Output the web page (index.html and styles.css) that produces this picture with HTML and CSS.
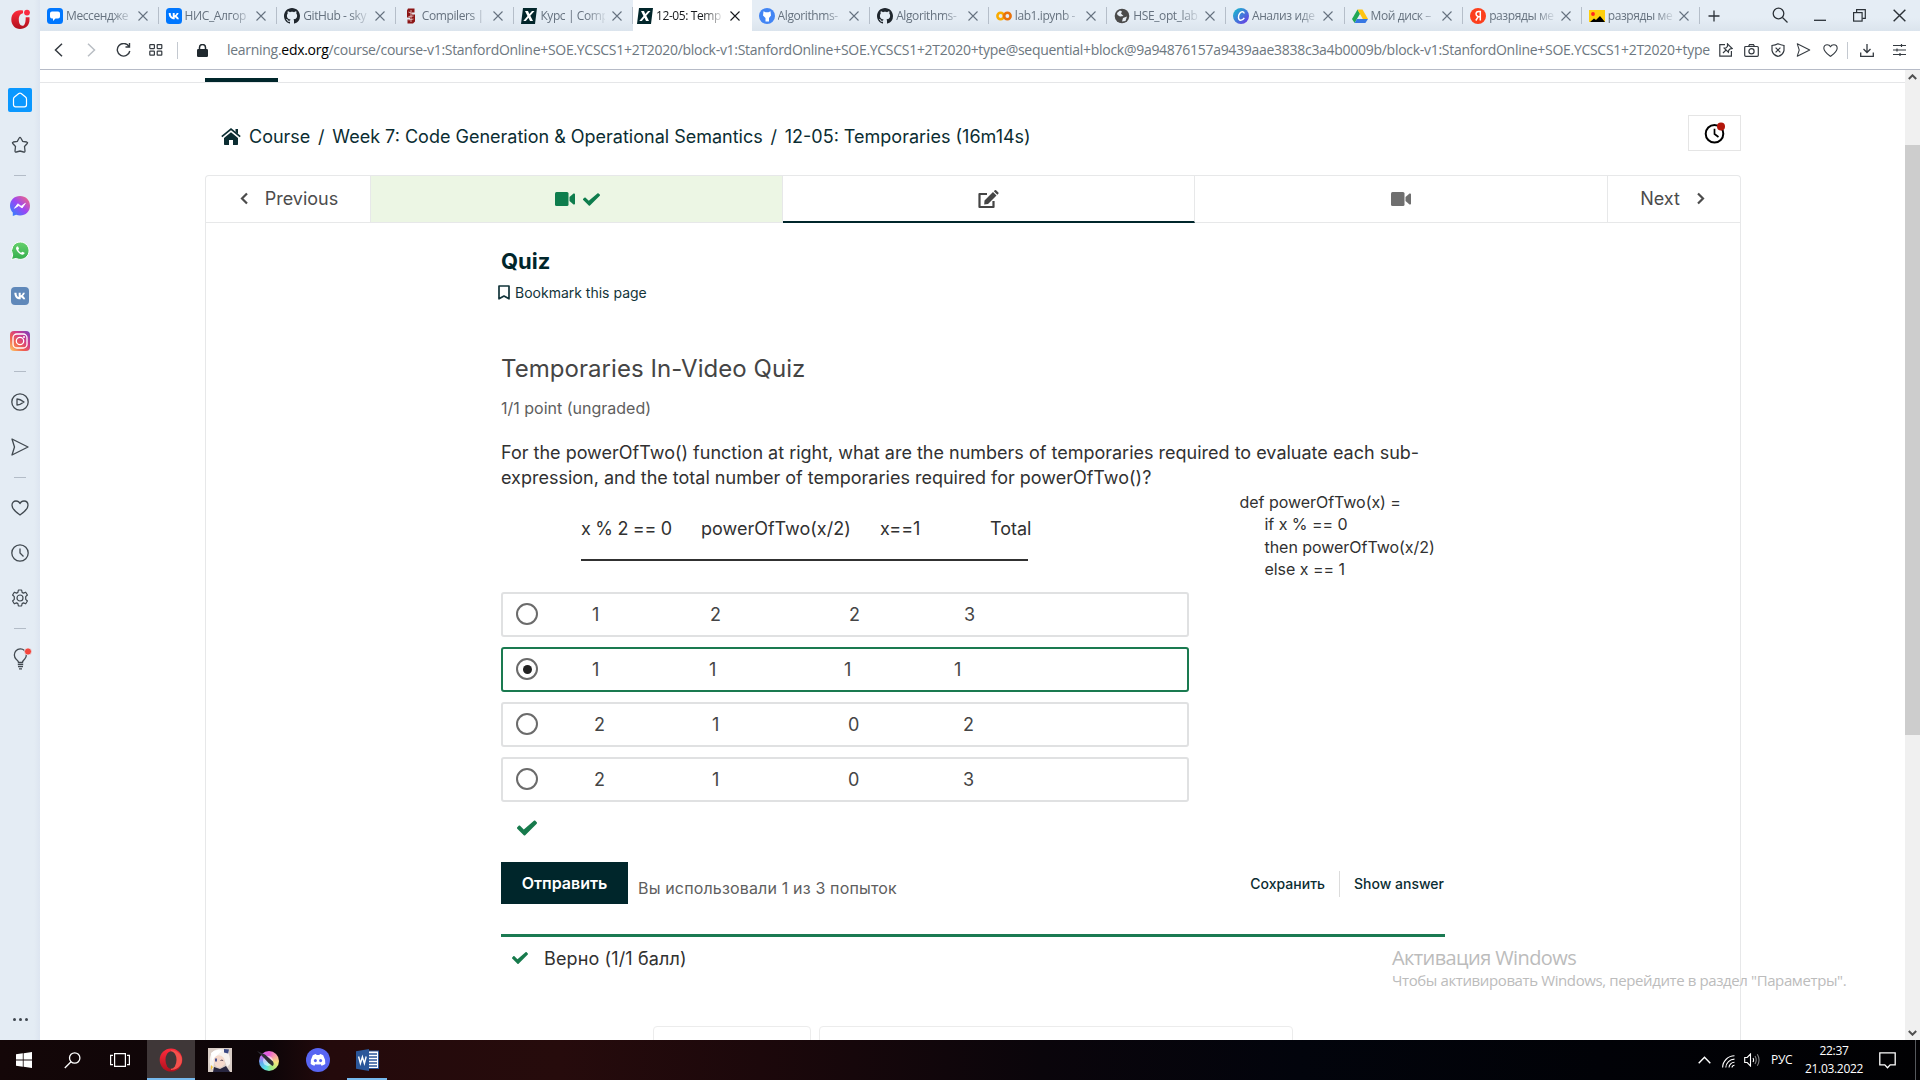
FILE: index.html
```html
<!DOCTYPE html>
<html lang="ru">
<head>
<meta charset="utf-8">
<title>12-05: Temporaries</title>
<link rel="stylesheet" href="styles.css">
</head>
<body>
<svg class="defs" width="0" height="0">
  <defs>
    <linearGradient id="gMess" x1="0" y1="1" x2="1" y2="0"><stop offset="0" stop-color="#1f8cff"/><stop offset=".5" stop-color="#9a46f5"/><stop offset="1" stop-color="#ff6b70"/></linearGradient>
    <linearGradient id="gInsta" x1="0" y1="1" x2="1" y2="0"><stop offset="0" stop-color="#ffd069"/><stop offset=".35" stop-color="#f0604f"/><stop offset=".65" stop-color="#cf3a8c"/><stop offset="1" stop-color="#7443c0"/></linearGradient>
    <linearGradient id="gWa" x1="0" y1="0" x2="0" y2="1"><stop offset="0" stop-color="#66d16d"/><stop offset="1" stop-color="#35ae4c"/></linearGradient>
    <linearGradient id="gCanva" x1="0" y1="0" x2="1" y2="1"><stop offset="0" stop-color="#10c3cc"/><stop offset="1" stop-color="#7230e6"/></linearGradient>
    <linearGradient id="gOpera" x1="0" y1="0" x2="0" y2="1"><stop offset="0" stop-color="#ff2b3c"/><stop offset="1" stop-color="#b0101d"/></linearGradient>
    <symbol id="close" viewBox="0 0 10 10"><path d="M.5.5l9 9M9.5.5l-9 9" fill="none" stroke="currentColor" stroke-width="1.1"/></symbol>
    <symbol id="vk" viewBox="0 0 24 24"><path d="M3.500 7h3.200c.1 4.400 1.900 6.100 3.300 6.500V7h3.100v3.700c1.500-.2 2.700-1.700 3.200-3.700h3c-.4 2.200-1.900 4-3.200 4.800 1.300.6 3 2.200 3.800 5.200h-3.300c-.6-1.800-1.800-3-3.500-3.200V17h-.6C7 17 3.700 13.300 3.500 7z" fill="#fff"/></symbol>
    <symbol id="github" viewBox="0 0 16 16"><path fill="currentColor" d="M8 0C3.580 0 0 3.580 0 8c0 3.540 2.290 6.530 5.470 7.590.4.070.55-.17.55-.38 0-.19-.01-.82-.01-1.490-2.010.37-2.530-.49-2.690-.94-.09-.23-.48-.94-.82-1.130-.28-.15-.68-.52-.01-.53.63-.01 1.080.58 1.230.82.72 1.210 1.870.87 2.330.66.070-.52.28-.87.51-1.070-1.780-.2-3.640-.89-3.640-3.950 0-.87.31-1.590.82-2.150-.08-.2-.36-1.020.08-2.120 0 0 .67-.21 2.200.82.64-.18 1.320-.27 2-.27s1.360.09 2 .27c1.530-1.040 2.200-.82 2.200-.82.44 1.100.16 1.920.08 2.120.51.56.82 1.270.82 2.150 0 3.070-1.870 3.750-3.650 3.950.29.25.54.73.54 1.480 0 1.070-.01 1.930-.01 2.200 0 .21.15.46.55.38A8.010 8.010 0 0 0 16 8c0-4.420-3.580-8-8-8z"/></symbol>
    <symbol id="heart" viewBox="0 0 18 18"><path d="M9 16C7 14.500 1 10.500 1 6.200 1 3.800 2.700 2 5 2c2 0 3.300 1 4 2.600C9.700 3 11 2 13 2c2.300 0 4 1.800 4 4.200C17 10.500 11 14.500 9 16z" fill="none" stroke="currentColor" stroke-width="1.300" stroke-linejoin="round"/></symbol>
    <symbol id="send" viewBox="0 0 18 18"><path d="M1 1l16 8L1 17l2.500-8z" fill="none" stroke="currentColor" stroke-width="1.300" stroke-linejoin="round"/></symbol>
    <symbol id="tick" viewBox="0 0 512 512"><path fill="currentColor" d="M174 440L7 273c-10-10-10-26 0-36l36-36c10-10 26-10 36 0l95 95L433 72c10-10 26-10 36 0l36 36c10 10 10 26 0 36L210 440c-10 10-26 10-36 0z"/></symbol>
    <symbol id="video" viewBox="0 0 20 14"><rect width="13.500" height="14" rx="1.500" fill="currentColor"/><path d="M14.500 5L18.500 1.600c.6-.4 1.500 0 1.500.7v9.400c0 .7-.9 1.100-1.500.7L14.500 9z" fill="currentColor"/></symbol>
  </defs>
</svg>

<div class="screen">
  <div class="browser">
    <aside class="rail">
      <div class="rail-logo"><svg width="21" height="21" viewBox="0 0 21 21"><path d="M10 1.200C5 1.200 1.300 5.200 1.300 10.500S5 20 10 20c5.500 0 9.500-3.500 9.500-9.500V8.200h-3.800c0 5.500-1 8.600-3.200 8.600-2.400 0-3.700-2.600-3.700-6.200 0-3.400 1.500-6 4.200-6.300V1.500C12.200 1.300 11 1.200 10 1.200z" fill="url(#gOpera)"/><circle cx="17" cy="3.600" r="2.900" fill="#fa2a41"/></svg></div>
      <div class="rail-item"><svg width="24" height="24" viewBox="0 0 24 24"><rect width="24" height="24" rx="2" fill="#0a98ff"/><path d="M10.800 5.500q1.200-.9 2.400 0l4.300 3.500q1 .8 1 2v5.800a2 2 0 0 1-2 2h-9a2 2 0 0 1-2-2V11q0-1.200 1-2z" fill="none" stroke="#fff" stroke-width="1.200" stroke-linejoin="round"/></svg></div>
      <div class="rail-item"><svg width="18" height="18" viewBox="0 0 18 18"><path d="M8.200 2q.8-1.300 1.600 0l1.900 3.300 4 .7q1.400.4.500 1.500l-2.700 3 .5 4.500q0 1.300-1.300 1L9 15l-3.700 1q-1.300.3-1.300-1l.5-4.500-2.700-3Q.9 6.400 2.300 6l4-.7z" fill="none" stroke="currentColor" stroke-width="1.300"/></svg></div>
      <div class="rail-dash"></div>
      <div class="rail-item"><svg width="20" height="20" viewBox="0 0 20 20"><path d="M10 0C4.300 0 0 4.200 0 9.700c0 3 1.200 5 2.800 6.800V20l3.300-1.200c1.200.5 2.500.7 3.900.7 5.700 0 10-4.200 10-9.800S15.700 0 10 0z" fill="url(#gMess)"/><path d="M4.500 12.300l3.300-4.500 3.300 2.500 4.300-3-3.300 4.700-3.300-2.500z" fill="#fff" stroke="#fff" stroke-width=".8"/></svg></div>
      <div class="rail-item"><svg width="20" height="20" viewBox="0 0 20 20"><path d="M10.500 1a8.700 8.700 0 1 1-4.200 16.400L1.500 18.500l1.200-4.600A8.700 8.700 0 0 1 10.500 1z" fill="url(#gWa)" stroke="#fff"/><path d="M7 5.500c-1.500 1-1.300 3 .7 5.200 2.200 2.500 4.700 3.500 6 2.600 1-.7 1-1.400.8-1.600l-2-1c-.7 0-.9 1.100-1.500 1-1-.3-2.500-1.800-2.700-2.700 0-.6.800-.8.700-1.400L8 5.500z" fill="#fff"/></svg></div>
      <div class="rail-item"><svg width="18" height="18" viewBox="0 0 18 18"><rect width="18" height="18" rx="4" fill="#5f88b9"/><use href="#vk" x="1" y="1" width="16" height="16"/></svg></div>
      <div class="rail-item"><svg width="20" height="20" viewBox="0 0 20 20"><rect width="20" height="20" rx="4" fill="url(#gInsta)"/><g fill="none" stroke="#fff" stroke-width="1.300"><rect x="3" y="3" width="14" height="14" rx="3.800"/><circle cx="10" cy="10" r="3.700"/></g><circle cx="14" cy="6" r="1" fill="#fff"/></svg></div>
      <div class="rail-dash"></div>
      <div class="rail-item shift"><svg width="18" height="18" viewBox="0 0 18 18" fill="none" stroke="currentColor" stroke-width="1.300" stroke-linejoin="round"><circle cx="9" cy="9" r="8.200"/><path d="M6 6v6q3 0 7-3-4-3-7-3z"/></svg></div>
      <div class="rail-item shift"><svg width="18" height="18"><use href="#send"/></svg></div>
      <div class="rail-dash"></div>
      <div class="rail-item shift"><svg width="18" height="18"><use href="#heart"/></svg></div>
      <div class="rail-item shift"><svg width="18" height="18" viewBox="0 0 18 18" fill="none" stroke="currentColor" stroke-width="1.300"><circle cx="9" cy="9" r="8.200"/><path d="M9 4.500V9l3.500 3.500"/></svg></div>
      <div class="rail-item shift"><svg width="18" height="18" viewBox="0 0 18 18" fill="none" stroke="currentColor" stroke-width="1.200" stroke-linejoin="round"><circle cx="9" cy="9" r="3"/><path d="M7.400 1h3.200l.5 2.400 1.300.7 2.300-.9 1.700 2.800-1.700 1.700v2.600l1.700 1.700-1.700 2.800-2.300-.9-1.300.7-.5 2.400H7.400l-.5-2.400-1.300-.7-2.300.9L1.600 12l1.700-1.700V7.700L1.600 6l1.700-2.800 2.300.9 1.300-.7z"/></svg></div>
      <div class="rail-dash"></div>
      <div class="rail-item"><svg width="24" height="24" viewBox="0 0 24 24"><path d="M10.500 15.500q0-1.300-2.300-3.300A6 6 0 1 1 16.700 12q-2.200 2-2.200 3.500z" fill="none" stroke="currentColor" stroke-width="1.300"/><path d="M9.800 17.500h5.400M10 19.700h5M11 21.800h3" stroke="currentColor" stroke-width="1.300"/><circle cx="20" cy="4.500" r="3.600" fill="#f4453c" stroke="#e4ecf4" stroke-width=".8"/></svg></div>
      <div class="rail-more"><i></i><i></i><i></i></div>
    </aside>

    <div class="window">
      <div class="tabbar">
        <div class="tab"><svg class="fav" viewBox="0 0 16 16"><rect width="16" height="16" rx="3.500" fill="#07f"/><path d="M5 3.500h6a2 2 0 0 1 2 2v3a2 2 0 0 1-2 2H8.500L6 13v-2.500H5a2 2 0 0 1-2-2v-3a2 2 0 0 1 2-2z" fill="#fff"/></svg><span class="tab-name">Мессендже</span><svg class="x"><use href="#close"/></svg></div>
        <div class="tab"><svg class="fav" viewBox="0 0 16 16"><rect width="16" height="16" rx="3.500" fill="#07f"/><use href="#vk" x=".5" y=".5" width="15" height="15"/></svg><span class="tab-name">НИС_Алгор</span><svg class="x"><use href="#close"/></svg></div>
        <div class="tab"><svg class="fav dark" viewBox="0 0 16 16"><use href="#github"/></svg><span class="tab-name">GitHub - sky</span><svg class="x"><use href="#close"/></svg></div>
        <div class="tab"><svg class="fav" viewBox="0 0 16 16"><path d="M5 .5h6.500v4H9v2h3v7L10 15.500H4.500v-4H7v-2H4v-7z" fill="#8c1515"/><path d="M8 2v12M5.500 4l5 2M5.500 8.500l5-.5M5.500 12l5-1" stroke="#e9cfd1" stroke-width=".8"/></svg><span class="tab-name">Compilers |</span><svg class="x"><use href="#close"/></svg></div>
        <div class="tab"><svg class="fav" viewBox="0 0 16 16"><path d="M2 0h14l-2 16H0z" fill="#02262b"/><path d="M4 3h3l1.300 3L11 3h2.500L9.300 7.800 12 13H9L7.500 9.800 4.800 13H2.300l4.200-5z" fill="#fff"/></svg><span class="tab-name">Курс | Comp</span><svg class="x"><use href="#close"/></svg></div>
        <div class="tab active"><svg class="fav" viewBox="0 0 16 16"><path d="M2 0h14l-2 16H0z" fill="#02262b"/><path d="M4 3h3l1.300 3L11 3h2.500L9.300 7.800 12 13H9L7.500 9.800 4.800 13H2.300l4.200-5z" fill="#fff"/></svg><span class="tab-name">12-05: Temp</span><svg class="x"><use href="#close"/></svg></div>
        <div class="tab"><svg class="fav" viewBox="0 0 16 16"><circle cx="8" cy="8" r="8" fill="#4285f4"/><path d="M4.500 3.200l2 1h3l2-1 .5 4.300-2 2.500v3.500H6.500V10L4 7.500z" fill="#fff"/></svg><span class="tab-name">Algorithms-</span><svg class="x"><use href="#close"/></svg></div>
        <div class="tab"><svg class="fav dark" viewBox="0 0 16 16"><use href="#github"/></svg><span class="tab-name">Algorithms-</span><svg class="x"><use href="#close"/></svg></div>
        <div class="tab"><svg class="fav" viewBox="0 0 16 16" fill="none" stroke-width="2.600"><circle cx="4.600" cy="8" r="3.200" stroke="#f9ab00"/><circle cx="11.400" cy="8" r="3.200" stroke="#e8710a"/></svg><span class="tab-name">lab1.ipynb -</span><svg class="x"><use href="#close"/></svg></div>
        <div class="tab"><svg class="fav" viewBox="0 0 16 16"><circle cx="8" cy="8" r="7.300" fill="#4b4b4b"/><path d="M3 5l3-2.500 2 1-1 2L9.500 8 6 8.500 3.500 7zM9 10l4-1.500L11.500 13 8 13.500z" fill="#e7eef5"/></svg><span class="tab-name">HSE_opt_lab</span><svg class="x"><use href="#close"/></svg></div>
        <div class="tab"><svg class="fav" viewBox="0 0 16 16"><circle cx="8" cy="8" r="8" fill="url(#gCanva)"/><path d="M11.200 5.500C11 3.500 8.500 3 6.800 5.200 4.800 7.800 5 12 7.500 12.200c1.500.1 2.800-.8 3.800-2.400" fill="none" stroke="#fff" stroke-width="1.400"/></svg><span class="tab-name">Анализ иде</span><svg class="x"><use href="#close"/></svg></div>
        <div class="tab"><svg class="fav" viewBox="0 0 16 16"><path d="M5.500 1.500L0 11l2.600 4L8 5.700z" fill="#20a756"/><path d="M5.500 1.500h5L16 11h-5.200z" fill="#ffc413"/><path d="M5 11h11l-2.600 4H2.600z" fill="#3777e3"/></svg><span class="tab-name">Мой диск –</span><svg class="x"><use href="#close"/></svg></div>
        <div class="tab"><svg class="fav" viewBox="0 0 16 16"><circle cx="8" cy="8" r="8" fill="#fc3f1d"/><path d="M10.300 12.500v-9H8.700C7 3.500 6 4.500 6 6.100c0 1.400.8 2 2.300 2.600h2M8.300 8.700l-2.500 3.800" fill="none" stroke="#fff" stroke-width="1.500"/></svg><span class="tab-name">разряды ме</span><svg class="x"><use href="#close"/></svg></div>
        <div class="tab"><svg class="fav" viewBox="0 0 16 16"><rect y="2" width="16" height="12" fill="#ffcf0d"/><circle cx="4" cy="6" r="1.900" fill="#f22"/><path d="M1 14l4-3.500 2 1.500 4-4 5 6z" fill="#000"/></svg><span class="tab-name">разряды ме</span><svg class="x"><use href="#close"/></svg></div>
        <div class="window-controls">
          <svg width="12" height="12" viewBox="0 0 12 12"><path d="M6 .5v11M.5 6h11" stroke="currentColor" stroke-width="1.300"/></svg>
          <svg width="16" height="16" viewBox="0 0 16 16" fill="none" stroke="currentColor" stroke-width="1.300"><circle cx="6.500" cy="6.500" r="5.300"/><path d="M10.500 10.500l5 5"/></svg>
          <svg width="12" height="12" viewBox="0 0 12 12"><path d="M0 11.300h12" stroke="currentColor" stroke-width="1.300"/></svg>
          <svg width="13" height="13" viewBox="0 0 13 13" fill="none" stroke="currentColor" stroke-width="1.200"><rect x=".6" y="3.600" width="8.500" height="8.500"/><path d="M3.600 3.500V.6h8.700v8.700h-3"/></svg>
          <svg width="13" height="13"><use href="#close"/></svg>
        </div>
      </div>

      <div class="toolbar">
        <div class="nav-icons">
          <svg width="9" height="14" viewBox="0 0 9 14"><path d="M8 .8L1.500 7 8 13.200" fill="none" stroke="currentColor" stroke-width="1.500"/></svg>
          <svg class="faint" width="9" height="14" viewBox="0 0 9 14"><path d="M1 .8L7.500 7 1 13.200" fill="none" stroke="currentColor" stroke-width="1.500"/></svg>
          <svg width="15" height="15" viewBox="0 0 15 15"><path d="M13 3.500A6.300 6.300 0 1 0 13.800 8M13.500 0v4H9.500" fill="none" stroke="currentColor" stroke-width="1.400"/></svg>
          <svg width="14" height="12" viewBox="0 0 14 12" fill="none" stroke="currentColor" stroke-width="1.200"><rect x=".8" y=".6" width="4.600" height="4" rx=".5"/><rect x="8.200" y=".6" width="4.600" height="4" rx=".5"/><rect x=".8" y="7.200" width="4.600" height="4" rx=".5"/><rect x="8.200" y="7.200" width="4.600" height="4" rx=".5"/></svg>
        </div>
        <div class="vline"></div>
        <svg class="lock" width="11" height="13" viewBox="0 0 11 13"><rect y="5" width="11" height="8" rx="1.200" fill="#20292f"/><path d="M2.500 5.500V3.500a3 3 0 0 1 6 0v2" fill="none" stroke="#20292f" stroke-width="1.500"/></svg>
        <div class="url">learning.<b>edx.org</b>/course/course-v1:StanfordOnline+SOE.YCSCS1+2T2020/block-v1:StanfordOnline+SOE.YCSCS1+2T2020+type@sequential+block@9a94876157a9439aae3838c3a4b0009b/block-v1:StanfordOnline+SOE.YCSCS1+2T2020+type</div>
        <div class="actions">
          <svg width="14" height="14" viewBox="0 0 14 14" fill="none" stroke="currentColor" stroke-width="1.200"><path d="M6 1.600H.8v11.600h11.600V8M4 10l3.200-3.200M8.500.8l4.700 4.700-2 .3-1.500 1.500-.3 2L5.200 5.200l2-.4 1.300-1.500z"/></svg>
          <svg width="15" height="13" viewBox="0 0 15 13" fill="none" stroke="currentColor" stroke-width="1.200"><rect x=".7" y="2.500" width="13.600" height="9.800" rx="1"/><path d="M4.500 2.500l1-1.800h4l1 1.800"/><circle cx="7.500" cy="7.200" r="2.600"/></svg>
          <svg width="14" height="14" viewBox="0 0 14 14" fill="none" stroke="currentColor" stroke-width="1.200"><path d="M1 2.500Q4.500 2 7 .7 9.500 2 13 2.500v5Q12 12 7 13.400 2 12 1 7.500zM4.600 4.600l4.800 4.800M9.400 4.600L4.600 9.400"/></svg>
          <svg width="15" height="14"><use href="#send"/></svg>
          <svg width="15" height="15"><use href="#heart"/></svg>
        </div>
        <div class="vline last"></div>
        <svg class="download" width="14" height="13" viewBox="0 0 14 13" fill="none" stroke="currentColor" stroke-width="1.300"><path d="M7 0v8.500M3.500 5L7 8.500 10.500 5M.7 8.500v3.800h12.600V8.500"/></svg>
        <svg class="sliders" width="13" height="12" viewBox="0 0 13 12" fill="none" stroke="currentColor" stroke-width="1.200"><path d="M0 1.500h13M0 6h13M0 10.500h13M8.500 0v3M4 4.500v3M7 9v3"/></svg>
      </div>

      <div class="viewport">
        <div class="page">
          <div class="course-tabs"><div class="course-tab-active"></div></div>
          <header class="crumb-row">
            <nav class="crumbs">
              <svg width="20" height="17" viewBox="0 0 20 17"><path d="M10 4.200l7 5.800v6.200a.7.700 0 0 1-.7.700H12v-5H8v5H3.700a.7.700 0 0 1-.7-.7V10z" fill="currentColor"/><path d="M.8 8.700L10 1.200l9.200 7.500" fill="none" stroke="currentColor" stroke-width="1.700"/><path d="M14.500 1H17v5l-2.500-2z" fill="currentColor"/></svg>
              <span class="c1">Course</span><span class="slash">/</span><span class="c2">Week 7: Code Generation &amp; Operational Semantics</span><span class="slash">/</span><span class="c3">12-05: Temporaries (16m14s)</span>
            </nav>
            <div class="notify"><svg width="22" height="22" viewBox="0 0 22 22"><circle cx="10.500" cy="11.700" r="8.800" fill="none" stroke="#000" stroke-width="2"/><path d="M10.500 6.700V12l4 3" fill="none" stroke="#000" stroke-width="1.700"/><circle cx="17" cy="4.500" r="4" fill="#b3160b"/></svg></div>
          </header>

          <div class="sequence">
            <div class="seq-nav">
              <div class="seq-prev"><svg width="8" height="13" viewBox="0 0 8 13"><path d="M7 1.500l-5 5 5 5" fill="none" stroke="currentColor" stroke-width="2.200"/></svg><span>Previous</span></div>
              <div class="seq-unit done"><svg width="20" height="14"><use href="#video"/></svg><svg width="17" height="17"><use href="#tick"/></svg></div>
              <div class="seq-unit current"><svg width="21" height="19" viewBox="0 0 21 19"><path d="M15.500 11v6H1.500V4H9" fill="none" stroke="currentColor" stroke-width="2.200" stroke-linejoin="round"/><path d="M6.500 10.500L15 2l3.500 3.500L10 14l-3.800.5zM15.800 1.200l1-1q.7-.4 1.300 0l2.300 2.300q.4.600 0 1.200l-1.100 1z" fill="currentColor"/></svg></div>
              <div class="seq-unit"><svg width="20" height="14"><use href="#video"/></svg></div>
              <div class="seq-next"><span>Next</span><svg width="8" height="13" viewBox="0 0 8 13"><path d="M1 1.500l5 5-5 5" fill="none" stroke="currentColor" stroke-width="2.200"/></svg></div>
            </div>

            <main class="unit">
              <h1>Quiz</h1>
              <div class="bookmark"><svg width="12" height="15" viewBox="0 0 12 15"><path d="M1 1h10v12.800L6 11l-5 2.800z" fill="none" stroke="currentColor" stroke-width="1.700" stroke-linejoin="round"/></svg><span>Bookmark this page</span></div>
              <h2>Temporaries In-Video Quiz</h2>
              <div class="points">1/1 point (ungraded)</div>
              <p class="question">For the powerOfTwo() function at right, what are the numbers of temporaries required to evaluate each sub-<br>expression, and the total number of temporaries required for powerOfTwo()?</p>

              <div class="columns">
                <div class="choices">
                  <div class="choice-head"><span>x % 2 == 0</span><span>powerOfTwo(x/2)</span><span>x==1</span><span>Total</span></div>
                  <div class="choice-rule"></div>
                  <div class="choice a"><i class="radio"></i><span>1</span><span>2</span><span>2</span><span>3</span></div>
                  <div class="choice b picked"><i class="radio"></i><span>1</span><span>1</span><span>1</span><span>1</span></div>
                  <div class="choice c"><i class="radio"></i><span>2</span><span>1</span><span>0</span><span>2</span></div>
                  <div class="choice c"><i class="radio"></i><span>2</span><span>1</span><span>0</span><span>3</span></div>
                  <div class="verdict"><svg width="20" height="20"><use href="#tick"/></svg></div>
                </div>
                <div class="code"><div>def powerOfTwo(x) =</div><div class="in">if x % == 0</div><div class="in">then powerOfTwo(x/2)</div><div class="in">else x == 1</div></div>
              </div>

              <div class="submit-row">
                <div class="submit">Отправить</div>
                <div class="attempts">Вы использовали 1 из 3 попыток</div>
                <div class="save">Сохранить</div>
                <div class="show">Show answer</div>
              </div>
              <div class="result"><svg width="16" height="16"><use href="#tick"/></svg><span>Верно (1/1 балл)</span></div>
              <div class="pager"><div class="pager-prev"></div><div class="pager-next"></div></div>
            </main>
          </div>
        </div>
        <div class="scrollbar">
          <svg width="9" height="6" viewBox="0 0 9 6"><path d="M.8 5L4.500 1.300 8.200 5" fill="none" stroke="#505050" stroke-width="2"/></svg>
          <div class="thumb"></div>
          <svg width="9" height="6" viewBox="0 0 9 6"><path d="M.8 1l3.700 3.700L8.200 1" fill="none" stroke="#505050" stroke-width="2"/></svg>
        </div>
      </div>
    </div>
  </div>

  <div class="taskbar">
    <div class="task"><svg width="16" height="16" viewBox="0 0 16 16" fill="#fff"><path d="M0 2.300l6.800-1v6.300H0zM7.600 1.200L16 0v7.600H7.600zM0 8.400h6.800v6.300l-6.800-1zM7.600 8.400H16V16l-8.400-1.200z"/></svg></div>
    <div class="task"><svg width="17" height="17" viewBox="0 0 17 17" fill="none" stroke="#fff" stroke-width="1.300"><circle cx="10.700" cy="6" r="5.200"/><path d="M7 9.800L.8 16"/></svg></div>
    <div class="task view"><svg width="20" height="14" viewBox="0 0 20 14" fill="none" stroke="#fff" stroke-width="1.200"><path d="M4.600.6h10.800v12.800H4.600zM3 2.300H.6v9.400H3M17 2.300h2.400v9.400H17"/></svg></div>
    <div class="task open lit"><svg width="24" height="24" viewBox="0 0 24 24"><ellipse cx="12" cy="12" rx="11.300" ry="11.500" fill="url(#gOpera)"/><path d="M12 2c4 0 11 3 11 10s-7 10-11 10z" fill="#f4514c"/><ellipse cx="12" cy="12" rx="5.500" ry="8.800" fill="#3f3738"/></svg></div>
    <div class="task"><svg width="24" height="24" viewBox="0 0 24 24"><rect width="24" height="24" fill="#d9cdc6"/><path d="M3 20C0 12 2 2 11 1s12 7 11 15l-3 3-3-8-9-2-2 12z" fill="#f6f1ee"/><path d="M6 9q6-4 10 1l1 6q-4 5-8 3-4-3-3-10z" fill="#f5d9cc"/><path d="M3 5q5-5 11-2l-7 6-3 4z" fill="#fff"/><path d="M5 24l1-5 6 2 6-3 4 6z" fill="#282640"/><path d="M7 10.500h2v3H7z" fill="#4a5494"/><path d="M12.500 12.500q1.500-1 2.700.2" stroke="#554354" fill="none"/><path d="M16 1l5 .5-1 4-4-1z" fill="#3c4a84"/><path d="M3 17l2 2-2 3z" fill="#f2c230"/></svg></div>
    <div class="task"><div class="krita"><svg width="22" height="22" viewBox="0 0 22 22"><circle cx="11" cy="11" r="5" fill="#fff" opacity=".55"/><path d="M0 1l8 3.500 8 7q1.500 3-.5 4.500l-4-3L7 8z" fill="#2f2e35"/></svg></div></div>
    <div class="task discord"><svg width="24" height="24" viewBox="0 0 24 24"><circle cx="12" cy="12" r="12" fill="#5865f2"/><path d="M6.800 7.200q1.500-.9 3.200-1.100l.6 1h2.800l.6-1q1.700.2 3.200 1.100Q19.600 11.500 19.300 16q-1.700 1.300-3.700 1.700l-.9-1.400q-2.700.6-5.400 0l-.9 1.400Q6.400 17.300 4.700 16 4.400 11.500 6.800 7.200z" fill="#fff"/><ellipse cx="9.400" cy="12.600" rx="1.500" ry="1.700" fill="#5865f2"/><ellipse cx="14.600" cy="12.600" rx="1.500" ry="1.700" fill="#5865f2"/></svg></div>
    <div class="task open word"><svg width="23" height="22" viewBox="0 0 23 22"><rect x="12" y="2" width="10.500" height="17.500" fill="#fff" stroke="#2b579a"/><path d="M13 5h8M13 8h8M13 11h8M13 14h8M13 17h8" stroke="#2b579a" stroke-width="1.300"/><path d="M0 2.300L13 0v22L0 19.700z" fill="#2b579a"/><path d="M2.600 7.500l1.800 7 2-6.500 2 6.500 1.800-7" fill="none" stroke="#fff" stroke-width="1.400"/></svg></div>
    <div class="tray">
      <svg width="13" height="8" viewBox="0 0 13 8"><path d="M.7 7.200L6.500 1.200l5.800 6" fill="none" stroke="#fff" stroke-width="1.400"/></svg>
      <svg class="wifi" width="13" height="13" viewBox="0 0 13 13" fill="none" stroke="#fff" stroke-width="1.100"><path d="M.6 12.500A12 12 0 0 1 12.500.8M3.800 12.500a8.700 8.700 0 0 1 8.700-8.400M7 12.500a5.400 5.400 0 0 1 5.500-5.200M10 12.500a2.500 2.500 0 0 1 2.500-2.200"/></svg>
      <svg class="sound" width="17" height="14" viewBox="0 0 17 14" fill="none" stroke="#fff" stroke-width="1.100"><path d="M.7 4.500h2.500L6.500 1v12L3.200 9.500H.7zM9 5q1.200 2 0 4"/><path d="M11 3q2.500 4 0 8M13.300 1.300q3.500 5.700 0 11.400" opacity=".5"/></svg>
      <span class="lang">РУС</span>
      <div class="clock"><span>22:37</span><span>21.03.2022</span></div>
      <svg class="note" width="17" height="17" viewBox="0 0 17 17"><path d="M.8.8h15.400v12h-5L8.500 15.800 5.800 12.800h-5z" fill="none" stroke="#fff" stroke-width="1.300"/></svg>
      <i class="peek"></i>
    </div>
  </div>

  <div class="watermark"><div class="wm-title">Активация Windows</div><div class="wm-text">Чтобы активировать Windows, перейдите в раздел "Параметры".</div></div>
</div>
</body>
</html>
```
FILE: styles.css
```css
* { box-sizing: border-box; }
body { margin: 0; font-family: Inter, "Noto Sans", sans-serif; background: #fff; overflow: hidden; }
svg { display: block; flex: none; }
.defs { position: absolute; }
.screen { position: relative; width: 1920px; height: 1080px; display: flex; flex-direction: column; overflow: hidden; }
.browser { height: 1040px; display: flex; }

/* left rail */
.rail { width: 40px; background: linear-gradient(90deg, #e4ecf4 34px, #dde5f0); display: flex; flex-direction: column; align-items: center; color: #414950; flex: none; }
.rail-logo { height: 77px; padding-top: 9px; }
.rail-item { height: 45px; width: 40px; display: flex; align-items: center; justify-content: center; }
.rail-item.shift { padding-right: 1px; }
.rail-dash { height: 16px; width: 12px; display: flex; align-items: center; }
.rail-dash::before { content: ""; height: 1px; width: 12px; background: #b3bcc7; }
.rail-more { margin-top: auto; height: 41px; display: flex; gap: 3px; align-items: center; }
.rail-more i { width: 3px; height: 3px; border-radius: 50%; background: #3f474f; }

/* tabs */
.window { width: 1880px; display: flex; flex-direction: column; }
.tabbar { height: 31px; display: flex; background: linear-gradient(#e5edf5 18px, #dbe4ed); font-family: "Open Sans", "Noto Sans", sans-serif; }
.tab { width: 118.6px; flex: none; display: flex; align-items: center; padding-left: 7px; position: relative; color: #66727f; }
.tab::after { content: ""; position: absolute; right: 0; top: 7px; height: 17px; width: 1px; background: #b5bec9; }
.tab.active { background: #fff; color: #16191c; padding-left: 4px; }
.tab.active .x { margin-left: 9px; }
.tab.active::after { display: none; }
.fav { width: 16px; height: 16px; }
.fav.dark { color: #1f262d; }
.tab-name { width: 65px; margin-left: 3px; font-size: 12px; letter-spacing: -.4px; line-height: 18px; white-space: nowrap; -webkit-mask-image: linear-gradient(90deg, #000 72%, rgba(0,0,0,.15)); mask-image: linear-gradient(90deg, #000 72%, rgba(0,0,0,.15)); }
.x { width: 10px; height: 10px; margin-left: 6.500px; }
.window-controls { display: flex; align-items: center; color: #2c3238; }
.window-controls svg:nth-child(1) { margin-left: 8px; }
.window-controls svg:nth-child(2) { margin-left: 52px; margin-top: -2px; }
.window-controls svg:nth-child(3) { margin-left: 26px; margin-top: -1px; }
.window-controls svg:nth-child(4) { margin-left: 27px; }
.window-controls svg:nth-child(5) { margin-left: 27px; }

/* address bar */
.toolbar { height: 39px; padding-left: 14px; border-bottom: 1px solid #b6bbc7; background: #fff; display: flex; align-items: center; color: #343a40; }
.nav-icons { display: flex; align-items: center; gap: 24px; width: 123px; }
.nav-icons svg:nth-child(3) { margin-left: -4px; }
.nav-icons svg:nth-child(4) { margin-left: -6px; }
.faint { color: #b9bec4; }
.vline { width: 1px; height: 17px; background: #c4c9d0; }
.lock { margin-left: 19px; }
.url { margin-left: 19px; width: 1482px; font: 14px/20px "Open Sans", "Noto Sans", sans-serif; letter-spacing: -.285px; color: #6d7780; white-space: nowrap; }
.url b { font-weight: 400; color: #000; }
.actions { display: flex; align-items: center; gap: 11.400px; margin-left: 10px; }
.vline.last { margin-left: 9px; }
.download { margin-left: 12px; }
.sliders { margin-left: 19px; }

/* page */
.viewport { flex: 1; display: flex; min-height: 0; }
.page { width: 1865px; height: 970px; overflow: hidden; display: flex; flex-direction: column; color: #454545; }
.course-tabs { height: 13px; border-bottom: 1px solid #e5e6e8; padding: 8px 0 0 165px; flex: none; }
.course-tab-active { width: 73px; height: 4px; background: #00262b; }
.crumb-row { height: 92px; width: 1536px; margin-left: 165px; padding: 32px 0 0 16px; display: flex; justify-content: space-between; align-items: flex-start; flex: none; }
.crumbs { display: flex; align-items: center; height: 42px; font-size: 18px; color: #0b2d32; white-space: nowrap; }
.crumbs .c1 { margin-left: 8px; }
.slash { width: 22px; text-align: center; }
.notify { width: 53px; height: 36px; border: 1px solid #e5e5e5; display: flex; align-items: center; justify-content: center; }
.sequence { width: 1536px; margin-left: 165px; height: 865px; border: 1px solid #e7e8e9; border-bottom: 0; border-radius: 4px 4px 0 0; flex: none; }
.seq-nav { height: 47px; display: grid; grid-template-columns: 165px 412px 412px 413px 1fr; font-size: 18px; color: #4c4c4c; }
.seq-nav > div { display: flex; align-items: center; justify-content: center; border-right: 1px solid #e7e8e9; border-bottom: 1px solid #e7e8e9; }
.seq-nav > div:last-child { border-right: 0; }
.seq-nav .seq-prev { padding: 0 0 1px 2px; }
.seq-prev span { margin-left: 17px; }
.seq-nav .seq-next { padding: 0 3px 1px 0; }
.seq-next svg { margin-left: 17px; }
.seq-unit { color: #6f6f6f; }
.seq-nav .done { background: #ecf6e4; color: #0e7d4d; gap: 8px; padding-left: 1px; }
.seq-nav .current { color: #454545; border-bottom: 2px solid #00262b; padding-top: 2px; }

.unit { width: 944px; margin-left: 295px; padding-top: 24px; }
h1 { margin: 0; font-size: 22px; line-height: 28px; font-weight: 700; color: #00262b; }
.bookmark { margin: 7px 0 0 -3px; height: 20px; display: flex; align-items: center; gap: 5px; font-size: 14px; color: #12343a; }
h2 { margin: 52px 0 0; font-size: 24px; line-height: 30px; font-weight: 400; letter-spacing: .05px; color: #454545; }
.points { margin-top: 14px; font-size: 16px; line-height: 20px; color: #5e5e5e; }
.question { margin: 22px 0 0; font-size: 18px; line-height: 25px; color: #313131; white-space: nowrap; }
.columns { display: flex; gap: 50.500px; }
.choices { width: 688px; padding-top: 26px; }
.choice-head { display: grid; grid-template-columns: 120px 179px 110px 1fr; padding-left: 80px; font-size: 18px; line-height: 25px; color: #313131; }
.choice-head span:first-child { letter-spacing: -.3px; }
.choice-rule { width: 447px; height: 2px; margin: 18px 0 31px 80px; background: #313131; }
.choice { height: 45px; margin-bottom: 10px; border: 2px solid #e0e1e2; border-radius: 3px; display: grid; align-items: center; font-size: 18px; color: #454545; }
.choice.a { grid-template-columns: 89px 118px 139px 115px 1fr; }
.choice.b { grid-template-columns: 89px 117px 135px 110px 1fr; }
.choice.c { grid-template-columns: 91px 118px 136px 115px 1fr; }
.choice.picked { border-color: #1a7a50; }
.radio { width: 22px; height: 22px; border: 2px solid #6b6b6b; border-radius: 50%; margin: -1px 0 0 13px; display: flex; align-items: center; justify-content: center; }
.picked .radio::before { content: ""; width: 9px; height: 9px; border-radius: 50%; background: #222; }
.verdict { height: 50px; padding: 5.500px 0 0 16px; color: #177a4c; }
.code { padding-top: .5px; font-size: 16px; line-height: 22.500px; letter-spacing: -.04px; color: #313131; white-space: nowrap; }
.code .in { padding-left: 25px; }
.submit-row { height: 42px; display: flex; align-items: center; }
.submit { width: 127px; height: 42px; line-height: 42px; text-align: center; background: #00262b; color: #fff; font-weight: 600; font-size: 16px; }
.attempts { margin-left: 10px; padding-top: 10px; font-size: 16px; letter-spacing: .16px; color: #5e5e5e; }
.save { margin: 2px 0 0 auto; padding-right: 14px; font-size: 14px; line-height: 26px; font-weight: 500; color: #0b2d32; border-right: 1px solid #dcdcdc; }
.show { margin: 2px 1px 0 14px; font-size: 14px; line-height: 26px; font-weight: 500; color: #0b2d32; }
.result { margin-top: 30px; border-top: 3px solid #1b7a52; padding: 9px 0 0 11px; height: 37px; display: flex; align-items: center; font-size: 18px; letter-spacing: .13px; color: #313131; }
.result svg { color: #177a4c; margin-top: -2px; }
.result span { margin-left: 16px; }
.pager { margin: 55px 0 0 152px; display: flex; gap: 8px; }
.pager div { height: 44px; border: 1px solid #ececec; border-radius: 4px; }
.pager-prev { width: 158px; }
.pager-next { width: 474px; }

.scrollbar { width: 15px; background: #f0f0f0; display: flex; flex-direction: column; align-items: center; padding: 4px 0; }
.thumb { width: 15px; height: 590px; margin: 65px 0 auto; background: #cdcdcd; }

/* taskbar */
.taskbar { height: 40px; display: flex; background: linear-gradient(90deg, #140708 0, #0d0508 270px, #240a0c 330px, #260b0c 560px, #1c080b 760px, #0a050b 1040px, #02040c 1300px, #010207 1600px, #010103); }
.task { width: 48px; height: 40px; display: flex; align-items: center; justify-content: center; position: relative; }
.task.view { margin-right: 3px; }
.discord { margin-left: 2px; }
.task:nth-child(5) { margin-left: 1px; }
.word { margin-left: 1px; }
.open::after { content: ""; position: absolute; left: 4px; right: 4px; bottom: 0; height: 2px; background: #76b9ed; }
.lit { background: #3f3738; }
.lit::after { left: 0; right: 0; }
.krita { width: 20px; height: 20px; margin: 1px 0 0 1px; border-radius: 50%; background: conic-gradient(#e95cd6, #f7a2a5, #f4e67c, #a5e87b, #5ce3e4, #61a7f0, #d26cf0, #e95cd6); }
.krita svg { margin: -1px 0 0 -2px; }
.tray { margin-left: auto; display: flex; align-items: center; color: #fff; font: 12px/18px "Open Sans", "Noto Sans", sans-serif; letter-spacing: -.3px; }
.wifi { margin-left: 11px; margin-top: 3px; }
.sound { margin-left: 9px; }
.lang { margin-left: 10px; width: 36px; }
.clock { width: 54px; display: flex; flex-direction: column; align-items: center; white-space: nowrap; }
.note { margin-left: 18px; }
.peek { width: 1px; height: 40px; margin: 0 4px 0 19px; background: #55585c; }

/* activation notice lies over the page */
.watermark { position: absolute; left: 1392px; top: 945px; font-family: "Open Sans", "Noto Sans", sans-serif; color: #bcbcbc; white-space: nowrap; }
.wm-title { font-size: 20px; line-height: 26px; letter-spacing: -.6px; }
.wm-text { font-size: 15px; line-height: 20px; margin-top: -1px; letter-spacing: -.39px; }
```
